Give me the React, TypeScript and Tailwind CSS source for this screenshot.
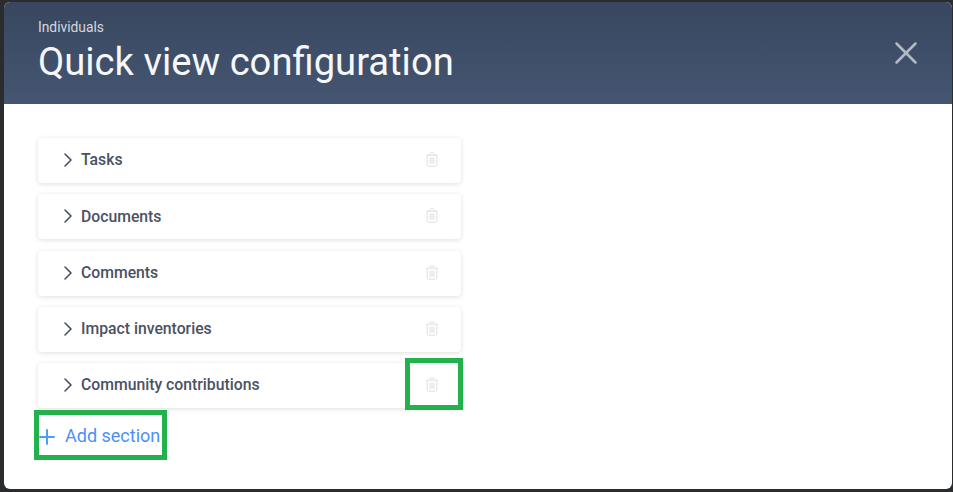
import React from 'react';
import { ChevronRight, Plus, X } from 'lucide-react';

const sections = ['Tasks', 'Documents', 'Comments', 'Impact inventories', 'Community contributions'];

function TrashIcon() {
  return (
    <svg width="14" height="15" viewBox="0 0 14 15" fill="none" stroke="#dfe0e3" strokeWidth="1" className="-mt-[2px] shrink-0">
      <path d="M.8 3.2h12.4" />
      <path d="M4.8 3V1.6c0-.4.3-.7.7-.7h3c.4 0 .7.3.7.7V3" />
      <path d="M2.2 3.4v9.4c0 .8.6 1.4 1.4 1.4h6.8c.8 0 1.4-.6 1.4-1.4V3.4" />
      <path d="M5.2 5.5v6.5M7 5.5v6.5M8.8 5.5v6.5" />
    </svg>
  );
}

export default function App() {
  return (
    <div className="h-[492px] w-[953px] overflow-hidden bg-[#2b2c2d] pt-[2px] pl-[4px] pr-px font-['Roboto',sans-serif]">
      <div className="relative h-[487px] overflow-hidden rounded-[6px] bg-white">
        <header className="flex h-[102px] items-start justify-between bg-gradient-to-b from-[#38475f] to-[#455672] pl-[34px] pr-[27px]">
          <div>
            <p className="mt-[16px] text-[13.8px] leading-[18px] text-[#d5d8de]">Individuals</p>
            <h1 className="mt-[1px] text-[38.2px] leading-[50px] font-normal text-[#f6f7f9]">Quick view configuration</h1>
          </div>
          <button className="mt-[32px] text-[#b4bac5]">
            <X size={38} strokeWidth={1.6} />
          </button>
        </header>

        <div className="w-[423px] ml-[34px] mt-[34px] flex flex-col gap-[11.25px]">
          {sections.map((name) => (
            <div
              key={name}
              className="flex h-[45px] items-center rounded-[4px] bg-white pl-[18px] pr-[22px] shadow-[0_1px_5px_rgba(0,0,0,0.13)]"
            >
              <ChevronRight size={24} strokeWidth={1.5} className="-mt-[1px] mr-[1px] text-[#3f4a60]" />
              <span className="flex-1 -mt-[0.5px] text-[15.75px] font-medium text-[#4a5263]">{name}</span>
              <TrashIcon />
            </div>
          ))}
        </div>

        <button className="ml-[31px] mt-[12px] flex items-center text-[18px] leading-[32px] text-[#4d8ff7]">
          <Plus size={24} strokeWidth={2} className="mr-[7px] mt-[2px] text-[#4ba0f5]" />
          <span className="-ml-px">Add section</span>
        </button>

        <div className="absolute left-[401px] top-[356px] h-[52px] w-[58px] border-[5px] border-[#22b14c]" />
        <div className="absolute left-[30px] top-[408px] h-[50px] w-[133px] border-[5px] border-[#22b14c]" />
      </div>
    </div>
  );
}
